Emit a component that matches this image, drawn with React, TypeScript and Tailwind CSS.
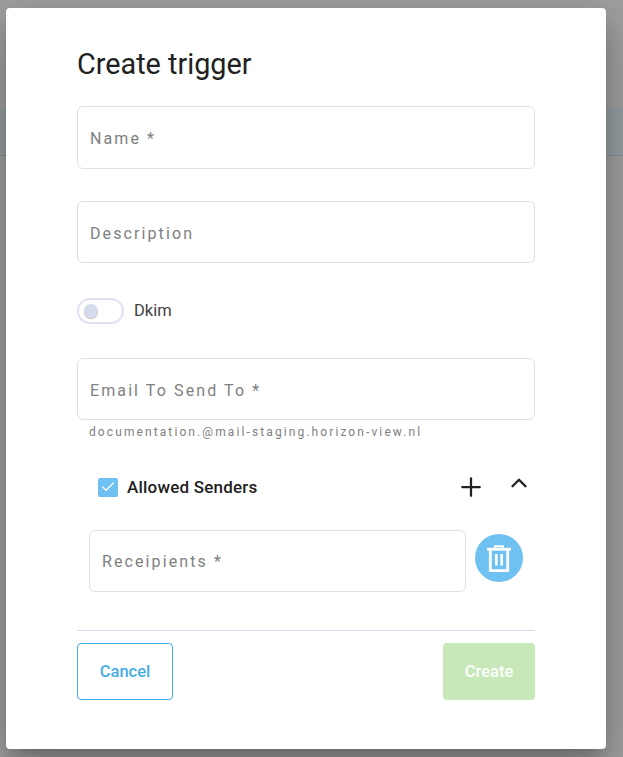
import { Check, ChevronUp, Plus } from "lucide-react";

function Field({ label, className }: { label: string; className: string }) {
  return (
    <div className={`flex items-center rounded-[6px] border border-[#e0e0e0] bg-white px-3 ${className}`}>
      <span className="text-[16px] tracking-[2.1px] text-[#808080]">{label}</span>
    </div>
  );
}

function TrashIcon() {
  return (
    <svg width="24" height="27" viewBox="0 0 24 27" fill="none" stroke="white" strokeWidth="2.8">
      <path d="M0 4.2H24" />
      <path d="M8 4V1.2H16V4" strokeWidth="2" />
      <path d="M3.3 4.5V25.6H20.7V4.5" />
      <path d="M9.3 9V20.5M14.7 9V20.5" strokeWidth="2.6" />
    </svg>
  );
}

export default function App() {
  return (
    <div className="relative h-[757px] w-[623px] overflow-hidden bg-[#a0a0a0] font-['Roboto',sans-serif]">
      {/* page behind the overlay */}
      <div className="h-[108px]" />
      <div className="h-[48px] border-b border-[#8c8c94] bg-[#969ea2]" />

      <div className="absolute left-[6px] top-[8px] h-[741px] w-[600px] rounded-[4px] bg-white pl-[71px] pr-[71px] pt-[37px] shadow-[0_11px_15px_-7px_rgba(0,0,0,0.2),0_24px_38px_3px_rgba(0,0,0,0.14),0_9px_46px_8px_rgba(0,0,0,0.12)]">
        <h2 className="h-[38px] text-[28.8px] leading-[38px] text-[#212121]">Create trigger</h2>

        <Field label="Name *" className="mt-[23px] h-[63px] pt-[2px]" />
        <Field label="Description" className="mt-[32px] h-[62px] pt-[4px]" />

        <div className="mt-[35px] flex h-[26px] items-center">
          <div className="flex h-[26px] w-[47px] items-center rounded-full border-2 border-[#dfe1f0] bg-white pl-[5px]">
            <div className="h-[14px] w-[14px] rounded-full bg-[#d5daec] shadow-[0_1px_1px_rgba(0,0,0,0.25)]" />
          </div>
          <span className="ml-[10px] text-[16.5px] text-[#424242]">Dkim</span>
        </div>

        <Field label="Email To Send To *" className="mt-[34px] h-[62px] pt-[4px]" />
        <div className="mt-[5px] h-[15px] pl-[12px] text-[12px] leading-[15px] tracking-[2.1px] text-[#808080]">
          documentation.@mail-staging.horizon-view.nl
        </div>

        <div className="mt-[35px] flex h-[24px] items-center pl-[21px] pr-[3px]">
          <div className="flex h-[19px] w-[20px] items-center justify-center rounded-[2px] bg-[#6ec1f1]">
            <Check size={16} color="white" strokeWidth={2} />
          </div>
          <span className="ml-[9px] pt-[2px] text-[17px] font-medium tracking-[0.2px] text-[#212121]">Allowed Senders</span>
          <div className="flex-1" />
          <Plus size={30} color="#212121" strokeWidth={1.8} />
          <ChevronUp size={26} color="#212121" strokeWidth={2.2} className="ml-[20px] -mt-[8px]" />
        </div>

        <div className="mt-[31px] flex h-[62px] items-center pl-[12px]">
          <Field label="Receipients *" className="h-[62px] w-[377px] pt-[2px]" />
          <div className="ml-[9px] -mt-[6px] flex h-[48px] w-[48px] items-center justify-center rounded-full bg-[#6ec1f1]">
            <TrashIcon />
          </div>
        </div>

        <div className="mt-[38px] h-px bg-[#d9dbea]" />

        <div className="mt-[12px] flex justify-between">
          <button className="h-[57px] w-[96px] rounded-[4px] border border-[#45ade8] bg-white pt-[2px] text-[16.5px] font-medium text-[#45ade8]">
            Cancel
          </button>
          <button className="h-[57px] w-[92px] rounded-[4px] bg-[#c7e8b8] pt-[2px] text-[16.5px] font-medium text-white">
            Create
          </button>
        </div>
      </div>
    </div>
  );
}
